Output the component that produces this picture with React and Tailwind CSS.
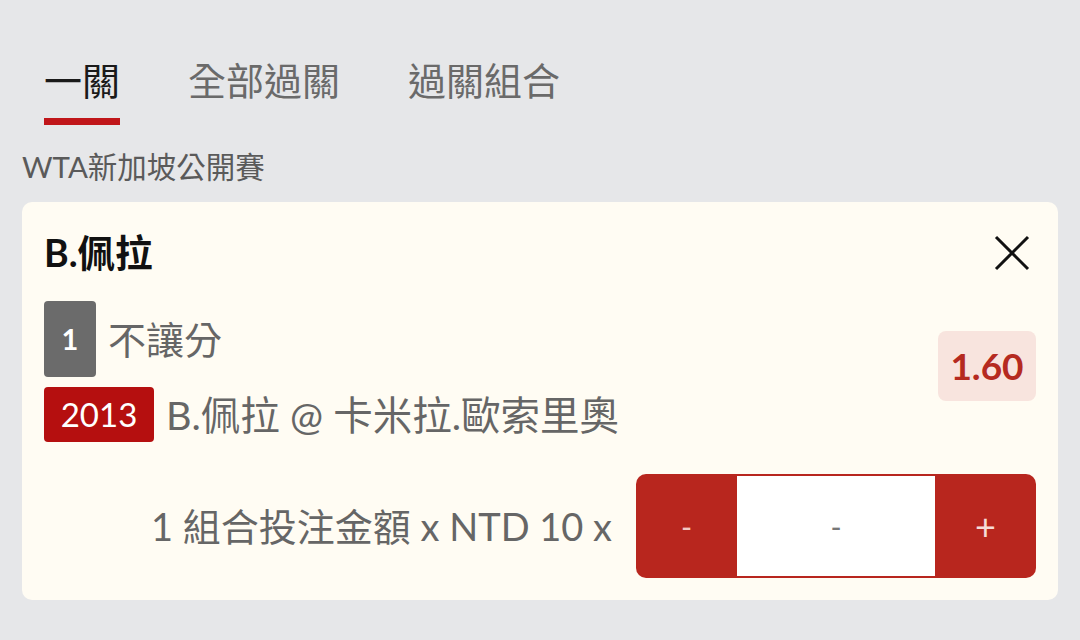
import React from "react";

const font = { fontFamily: 'Lato, "Noto Sans CJK TC", sans-serif' };

export default function App() {
  const tabs = ["一關", "全部過關", "過關組合"];
  return (
    <div
      className="w-[1080px] h-[640px] bg-[#e6e7e9] overflow-hidden"
      style={font}
    >
      <div className="flex items-end gap-[68px] pl-[44px] pt-[54px]">
        {tabs.map((t, i) => (
          <div key={t} className="flex flex-col">
            <span
              className={
                "text-[38px] leading-[52px] " +
                (i === 0 ? "text-[#1a1a1a]" : "text-[#6a6a6a]")
              }
            >
              {t}
            </span>
            <div
              className={
                "mt-[12px] h-[7px] " + (i === 0 ? "bg-[#c0161a]" : "bg-transparent")
              }
            />
          </div>
        ))}
      </div>

      <div className="pl-[22px] mt-[24px] text-[29.5px] leading-[36px] text-[#5a5a5a]">
        WTA新加坡公開賽
      </div>

      <div className="mx-[22px] mt-[17px] h-[398px] rounded-[10px] bg-[#fffcf3] px-[22px] pt-[28px]">
        <div className="flex items-center justify-between">
          <div className="text-[37.5px] leading-[46px] font-bold text-[#111]">
            B.佩拉
          </div>
          <svg
            width="36"
            height="36"
            viewBox="0 0 36 36"
            className="mr-[6px]"
          >
            <path
              d="M2 2 L34 34 M34 2 L2 34"
              stroke="#111"
              strokeWidth="3"
              fill="none"
            />
          </svg>
        </div>

        <div className="mt-[25px] flex items-center justify-between">
          <div className="flex flex-col gap-[10px]">
            <div className="flex items-center gap-[12px]">
              <div className="w-[52px] h-[76px] rounded-[4px] bg-[#6b6b6b] flex items-center justify-center text-white text-[29px] font-bold">
                1
              </div>
              <span className="text-[38px] text-[#666] leading-[48px]">
                不讓分
              </span>
            </div>
            <div className="flex items-center gap-[12px]">
              <div className="w-[110px] h-[55px] rounded-[4px] bg-[#b50f0f] flex items-center justify-center text-white text-[33px]">
                2013
              </div>
              <span className="text-[39.5px] text-[#666] leading-[48px]">
                B.佩拉 @ 卡米拉.歐索里奧
              </span>
            </div>
          </div>
          <div className="w-[98px] h-[70px] rounded-[8px] bg-[#f8e4de] flex items-center justify-center text-[37px] font-bold text-[#b52a20] mb-[12px]">
            1.60
          </div>
        </div>

        <div className="mt-[32px] flex items-center justify-end gap-[24px]">
          <span className="text-[38px] text-[#666]">
            1 組合投注金額 x NTD 10 x
          </span>
          <div className="w-[400px] h-[104px] rounded-[10px] bg-[#b8261e] flex items-stretch overflow-hidden py-[2px]">
            <div className="w-[101px] flex items-center justify-center text-[30px] text-[#f3c9c4]">
              -
            </div>
            <div className="w-[198px] bg-white flex items-center justify-center text-[30px] text-[#777]">
              -
            </div>
            <div className="flex-1 flex items-center justify-center text-[36px] text-[#f6dcd8]">
              +
            </div>
          </div>
        </div>
      </div>
    </div>
  );
}
